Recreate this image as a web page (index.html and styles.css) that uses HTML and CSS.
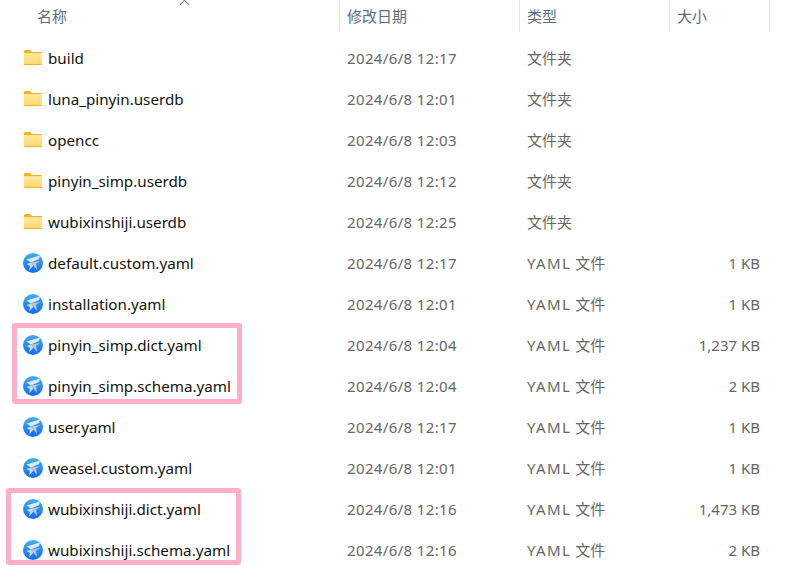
FILE: index.html
```html
<!DOCTYPE html>
<html lang="zh">
<head>
  <meta charset="UTF-8">
  <title>Rime 用户文件夹</title>
  <link rel="stylesheet" href="styles.css">
</head>
<body>
  <svg class="defs" width="0" height="0">
    <defs>
      <linearGradient id="folderFill" x1="0" y1="0" x2="0" y2="1">
        <stop offset="0" stop-color="#ffe9a0"/>
        <stop offset="1" stop-color="#ffd667"/>
      </linearGradient>
      <linearGradient id="ballFill" x1="0" y1="0" x2="0" y2="1">
        <stop offset="0" stop-color="#3fb0ee"/>
        <stop offset="1" stop-color="#0f6cf0"/>
      </linearGradient>
      <symbol id="folder" viewBox="0 0 20 18">
        <path d="M1 2.500C1 1.700 1.600 1 2.400 1H7l2 2H19v1.500H1z" fill="#f5b21b"/>
        <path d="M1 4.500h18V15c0 .6-.4 1-1 1H2c-.6 0-1-.4-1-1z" fill="url(#folderFill)"/>
        <path d="M1 15h18v.4c0 .4-.3.6-.7.6H1.700c-.4 0-.7-.2-.7-.6z" fill="#f2b32a"/>
      </symbol>
      <symbol id="yaml" viewBox="0 0 20 20">
        <circle cx="10" cy="10" r="10" fill="url(#ballFill)"/>
        <path d="M17 2.500 3.500 6.500 8 9.500 16 6z" fill="#e3e8ee"/>
        <path d="M8 9.500 3.500 11l3.500 2-1 4.500 4.500-5z" fill="#cfd7e0"/>
        <path d="M17.500 8 8 9.500l2.500 3 3.500 4.500-.8-6.500z" fill="#b9c5d2"/>
      </symbol>
    </defs>
  </svg>

  <div class="header">
    <div class="col-name head-cell">名称<span class="sort"></span></div>
    <div class="col-date head-cell">修改日期</div>
    <div class="col-type head-cell">类型</div>
    <div class="col-size head-cell">大小</div>
  </div>

  <div class="list">
    <div class="row"><div class="col-name"><svg class="icon"><use href="#folder"/></svg>build</div><div class="col-date">2024/6/8 12:17</div><div class="col-type">文件夹</div><div class="col-size"></div></div>
    <div class="row"><div class="col-name"><svg class="icon"><use href="#folder"/></svg>luna_pinyin.userdb</div><div class="col-date">2024/6/8 12:01</div><div class="col-type">文件夹</div><div class="col-size"></div></div>
    <div class="row"><div class="col-name"><svg class="icon"><use href="#folder"/></svg>opencc</div><div class="col-date">2024/6/8 12:03</div><div class="col-type">文件夹</div><div class="col-size"></div></div>
    <div class="row"><div class="col-name"><svg class="icon"><use href="#folder"/></svg>pinyin_simp.userdb</div><div class="col-date">2024/6/8 12:12</div><div class="col-type">文件夹</div><div class="col-size"></div></div>
    <div class="row"><div class="col-name"><svg class="icon"><use href="#folder"/></svg>wubixinshiji.userdb</div><div class="col-date">2024/6/8 12:25</div><div class="col-type">文件夹</div><div class="col-size"></div></div>
    <div class="row"><div class="col-name"><svg class="icon"><use href="#yaml"/></svg>default.custom.yaml</div><div class="col-date">2024/6/8 12:17</div><div class="col-type"><span class="ext">YAML</span> 文件</div><div class="col-size">1 KB</div></div>
    <div class="row"><div class="col-name"><svg class="icon"><use href="#yaml"/></svg>installation.yaml</div><div class="col-date">2024/6/8 12:01</div><div class="col-type"><span class="ext">YAML</span> 文件</div><div class="col-size">1 KB</div></div>
    <div class="row"><div class="col-name"><svg class="icon"><use href="#yaml"/></svg>pinyin_simp.dict.yaml</div><div class="col-date">2024/6/8 12:04</div><div class="col-type"><span class="ext">YAML</span> 文件</div><div class="col-size">1,237 KB</div></div>
    <div class="row"><div class="col-name"><svg class="icon"><use href="#yaml"/></svg>pinyin_simp.schema.yaml</div><div class="col-date">2024/6/8 12:04</div><div class="col-type"><span class="ext">YAML</span> 文件</div><div class="col-size">2 KB</div></div>
    <div class="row"><div class="col-name"><svg class="icon"><use href="#yaml"/></svg>user.yaml</div><div class="col-date">2024/6/8 12:17</div><div class="col-type"><span class="ext">YAML</span> 文件</div><div class="col-size">1 KB</div></div>
    <div class="row"><div class="col-name"><svg class="icon"><use href="#yaml"/></svg>weasel.custom.yaml</div><div class="col-date">2024/6/8 12:01</div><div class="col-type"><span class="ext">YAML</span> 文件</div><div class="col-size">1 KB</div></div>
    <div class="row"><div class="col-name"><svg class="icon"><use href="#yaml"/></svg>wubixinshiji.dict.yaml</div><div class="col-date">2024/6/8 12:16</div><div class="col-type"><span class="ext">YAML</span> 文件</div><div class="col-size">1,473 KB</div></div>
    <div class="row"><div class="col-name"><svg class="icon"><use href="#yaml"/></svg>wubixinshiji.schema.yaml</div><div class="col-date">2024/6/8 12:16</div><div class="col-type"><span class="ext">YAML</span> 文件</div><div class="col-size">2 KB</div></div>
  </div>

  <div class="mark mark-pinyin"></div>
  <div class="mark mark-wubi"></div>
</body>
</html>
```

FILE: styles.css
```css
:root {
  --head-txt: #5d6b7c;
  --cell-txt: #666;
  --name-txt: #111;
  --divider: #e5e5e5;
  --pink: #ffb0c8;
  --font-ui: 'Noto Sans', 'Noto Sans CJK SC', sans-serif;
}
body {
  margin: 0;
  width: 794px;
  height: 584px;
  overflow: hidden;
  position: relative;
  background: #fff;
  font-family: var(--font-ui);
  font-size: 15px;
  color: var(--cell-txt);
}
.defs { position: absolute; }

.header, .row {
  display: grid;
  grid-template-columns: 340px 180px 150px 100px;
}
.header { height: 32px; }
.head-cell {
  position: relative;
  height: 32px;
  line-height: 33px;
  padding-left: 7px;
  color: var(--head-txt);
  border-right: 1px solid var(--divider);
}
.header .col-name { padding-left: 37px; }
.sort {
  position: absolute;
  left: 181px;
  top: 1px;
  width: 6px;
  height: 6px;
  border-left: 1px solid #7d7d7d;
  border-top: 1px solid #7d7d7d;
  transform: rotate(45deg);
}

.list { padding-top: 6px; }
.row {
  height: 41px;
  line-height: 41px;
  white-space: nowrap;
}
.row .col-name {
  display: flex;
  align-items: center;
  gap: 5px;
  padding-left: 23px;
  color: var(--name-txt);
  font-size: 15.2px;
}
.row .col-date {
  padding-left: 7px;
  letter-spacing: 0.36px;
}
.row .col-type { padding-left: 7px; }
.ext { letter-spacing: 1.4px; }
.row .col-size {
  padding-right: 10px;
  text-align: right;
}
.icon {
  width: 20px;
  height: 20px;
  flex: none;
  margin-top: -2px;
}

.mark {
  position: absolute;
  box-sizing: border-box;
  border: 5px solid var(--pink);
  border-radius: 3px;
}
.mark-pinyin { left: 12px; top: 323px; width: 230px; height: 81px; }
.mark-wubi { left: 6px; top: 488px; width: 235px; height: 77px; }
```
